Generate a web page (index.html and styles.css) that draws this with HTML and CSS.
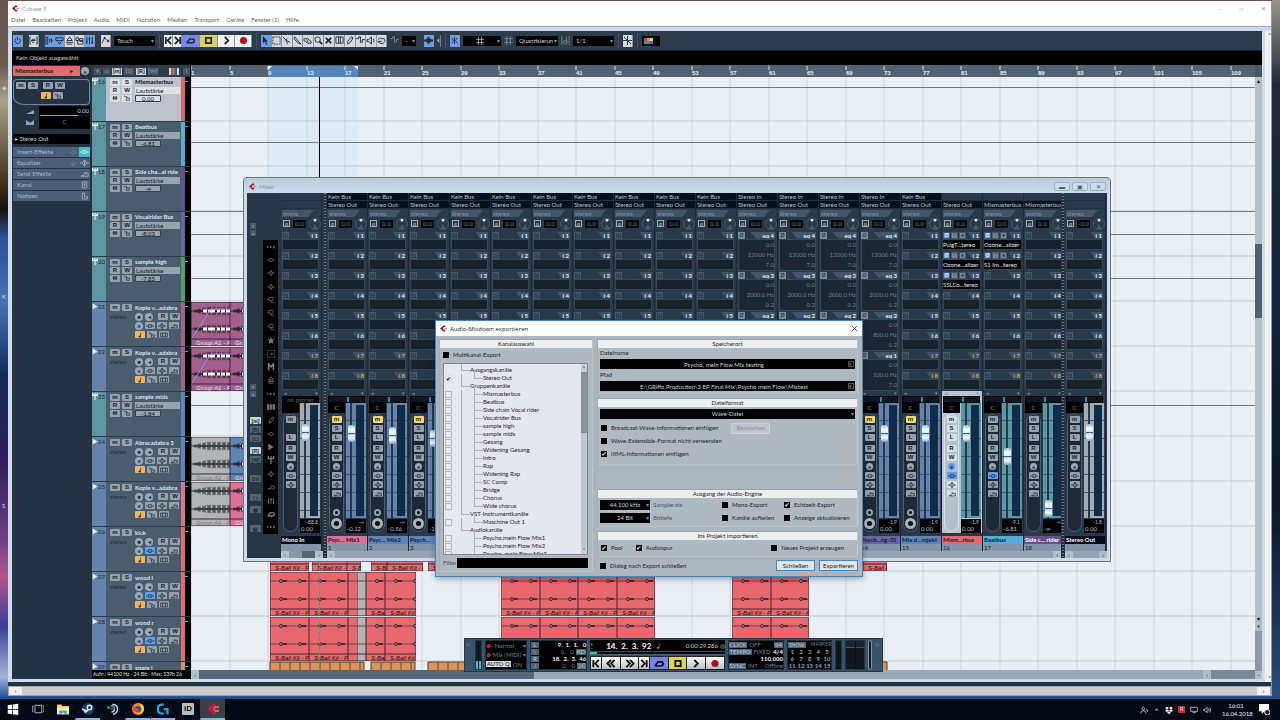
FILE: index.html
```html
<!DOCTYPE html>
<html lang="de">
<head>
<meta charset="utf-8">
<title>Cubase 5</title>
<link rel="stylesheet" href="styles.css">
</head>
<body>
<svg class="defs" aria-hidden="true">
  <symbol id="i-cubase" viewBox="0 0 12 12"><path d="M7 0 0 6l7 6 2-2V8H6L5 6l1-2h3V2z" fill="#a9152f"/><path d="M8 5h4v2H8z" fill="#d8808c"/></symbol>
  <symbol id="i-cubase-red" viewBox="0 0 12 12"><path d="M7 0 9 2 6 6l3 4-2 2L0 6z" fill="#c01c38"/><path d="M8 3h4v6H8L6 6z" fill="#e8576a"/><path d="M8 5h4v2H8z" fill="#4a4248"/></symbol>
  <symbol id="i-power" viewBox="0 0 10 10"><path d="M5 1v4M3 3a3 3 0 1 0 4 0" class="s"/></symbol>
  <symbol id="i-edit" viewBox="0 0 10 10"><path d="M2 1H1v8h1M8 1h1v8H8M3 5h4a2 2 0 1 0-1 2" class="s"/></symbol>
  <symbol id="i-insp" viewBox="0 0 10 10"><path d="M1 1h2v8H1zM5 3v4M7 3q3 2 0 4z" class="s"/></symbol>
  <symbol id="i-over" viewBox="0 0 10 10"><path d="M1 2h8v3H1zM3 6l2 3 2-3" class="s"/></symbol>
  <symbol id="i-pool" viewBox="0 0 10 10"><path d="M5 1 2 5h6zM1 7h8M2 9h6" class="s"/></symbol>
  <symbol id="i-mix" viewBox="0 0 10 10"><path d="M1 2h3v3H1zM5 3h4v2H5zM3 5v4h6V6H5" class="s"/></symbol>
  <symbol id="i-fad" viewBox="0 0 10 10"><path d="M2 1v8M5 1v8M8 1v8M1 6h2M4 3h2M7 7h2" class="s"/></symbol>
  <symbol id="i-auto" viewBox="0 0 10 10"><path d="M1 8 4 2l4 4 1-2" class="s"/><circle cx="4" cy="2" r="1"/><circle cx="8" cy="6" r="1"/></symbol>
  <symbol id="i-cross" viewBox="0 0 10 10"><path d="M5 0v10M0 5h10M1 1l8 8" class="s"/></symbol>
  <symbol id="i-start" viewBox="0 0 10 10"><path d="M2 1v8M8 1 4 5l4 4" class="s w"/></symbol>
  <symbol id="i-end" viewBox="0 0 10 10"><path d="M8 1v8M2 1l4 4-4 4" class="s w"/></symbol>
  <symbol id="i-rew" viewBox="0 0 10 10"><path d="M5 1 1 5l4 4M9 1 5 5l4 4" class="s w"/></symbol>
  <symbol id="i-fwd" viewBox="0 0 10 10"><path d="m1 1 4 4-4 4M5 1l4 4-4 4" class="s w"/></symbol>
  <symbol id="i-cycle" viewBox="0 0 12 10"><path d="M1 8h7q3 0 3-3 0-2-3-2H5L1 8" class="s w"/></symbol>
  <symbol id="i-stop" viewBox="0 0 10 10"><path d="M2 2h6v6H2z" class="s w"/></symbol>
  <symbol id="i-play" viewBox="0 0 10 10"><path d="m3 1 4 4-4 4" class="s w"/></symbol>
  <symbol id="i-rec" viewBox="0 0 10 10"><circle cx="5" cy="5" r="4" fill="#a81820"/></symbol>
  <symbol id="i-arrow" viewBox="0 0 10 10"><path d="M2 0v8l2-2 2 4 1-1-2-3h3z"/></symbol>
  <symbol id="i-range" viewBox="0 0 10 10"><path d="M1 1h8v8H1z" class="s" stroke-dasharray="2 1"/></symbol>
  <symbol id="i-split" viewBox="0 0 10 10"><path d="m1 1 4 4 4 2M5 5l1 4M3 5l3-2" class="s"/></symbol>
  <symbol id="i-glue" viewBox="0 0 10 10"><path d="m2 1 5 6 2 2-3-1-5-5z" class="s"/></symbol>
  <symbol id="i-erase" viewBox="0 0 10 10"><path d="M1 3h4l4 3v2H5L1 5zM4 4l2 3" class="s"/></symbol>
  <symbol id="i-zoomt" viewBox="0 0 10 10"><circle cx="4" cy="4" r="3" class="s"/><path d="m6 6 3 3" class="s w"/></symbol>
  <symbol id="i-mute" viewBox="0 0 10 10"><path d="m2 2 6 6M8 2 2 8" class="s w"/></symbol>
  <symbol id="i-warp" viewBox="0 0 10 10"><path d="M1 1v7h8V1M4 1v7M6 1v7M1 1h8" class="s"/></symbol>
  <symbol id="i-draw" viewBox="0 0 10 10"><path d="M7 1 3 6v3l3-2 3-5z" class="s"/></symbol>
  <symbol id="i-line" viewBox="0 0 10 10"><path d="M0 3h3V1h2v6h2V4h3" class="s"/></symbol>
  <symbol id="i-speaker" viewBox="0 0 10 10"><path d="M1 4h2l3-3v8L3 6H1zM8 3q2 2 0 4" class="s"/></symbol>
  <symbol id="i-hand" viewBox="0 0 10 10"><path d="M1 4q2-3 4-1 4-1 4 3-2 4-6 2L1 6h4" class="s"/></symbol>
  <symbol id="i-snap" viewBox="0 0 10 10"><path d="M2 2 4 5 2 8M8 2 6 5l2 3M5 1v8" class="s"/></symbol>
  <symbol id="i-scroll" viewBox="0 0 10 10"><path d="M5 1v8M0 5h3M10 5H7M3 3v4M7 3v4" class="s w"/></symbol>
  <symbol id="i-left" viewBox="0 0 10 10"><path d="M6 2v6L3 5z"/></symbol>
  <symbol id="i-grid" viewBox="0 0 10 10"><path d="M3 0v10M7 0v10M0 3h10M0 7h10" class="s"/></symbol>
  <symbol id="i-quant" viewBox="0 0 10 10"><path d="M1 0v10M9 0v10M6 1v6" class="s"/><circle cx="5" cy="7" r="2" class="s"/></symbol>
  <symbol id="i-note" viewBox="0 0 10 10"><path d="M6 1v6" class="s"/><ellipse cx="4.500" cy="7.500" rx="2" ry="1.500"/></symbol>
  <symbol id="i-lock" viewBox="0 0 10 10"><path d="M4 5h5v4H4zM5 5V3H1V1" class="s"/></symbol>
  <symbol id="i-ins" viewBox="0 0 12 8"><path d="M0 4h3M9 4h3M4 2h4v4H4z" class="s"/></symbol>
  <symbol id="i-eq" viewBox="0 0 12 8"><path d="m6 0 3 4-3 4-3-4zM0 4h3M9 4h3M6 0v8" class="s"/></symbol>
  <symbol id="i-send" viewBox="0 0 12 8"><path d="M1 7h10V3H7L5 6H2M5 3l2-2" class="s"/></symbol>
  <symbol id="i-lanes" viewBox="0 0 12 8"><path d="M1 1h10v6H1zM4 1v6M8 1v6" class="s"/></symbol>
  <symbol id="i-strip" viewBox="0 0 12 8"><path d="M3 0h6v8H3zM6 2v4M5 3h2" class="s"/></symbol>
  <symbol id="i-pad" viewBox="0 0 12 8"><path d="M3 0v8h7V5H6V0z" class="s"/></symbol>
  <symbol id="i-bars" viewBox="0 0 12 8"><path d="M4 1v6M6 1v6M8 1v6M2 4h8" class="s"/></symbol>
  <symbol id="i-fork" viewBox="0 0 10 12"><path d="M1 0v4h8V0M5 0v12" class="s w"/></symbol>
  <symbol id="i-wave" viewBox="0 0 10 12"><path d="m1 1 8 5-8 5z"/></symbol>
  <symbol id="i-star" viewBox="0 0 10 10"><path d="m5 0 1 4h4L7 6l1 4-3-2-3 2 1-4-3-2h4z"/></symbol>
  <symbol id="i-preset" viewBox="0 0 12 10"><path d="M3 1h6v5H3zM0 4h3M6 6v3h5" class="s"/></symbol>
  <symbol id="i-dots" viewBox="0 0 12 10"><path d="M0 4h2v2H0zM4 4h3v2H4zM9 3h1v4H9zM11 3h1v4h-1z"/></symbol>
  <symbol id="i-m" viewBox="0 0 10 10"><path d="M2 9V1l3 4 3-4v8" class="s w"/></symbol>
  <symbol id="i-box" viewBox="0 0 10 10"><path d="M0 0h10v10H0z" class="s"/><path d="M5 4h2v2H5z"/></symbol>
  <symbol id="i-keys" viewBox="0 0 12 10"><path d="M0 1h12v8H0z"/><path d="M4 1v8M8 1v8" stroke="#000"/></symbol>
  <symbol id="i-x" viewBox="0 0 10 10"><path d="m1 1 8 8M9 1 1 9" class="s"/></symbol>
</svg>
<main class="desktop">
  <div class="desk-icons"><span>&#9672;</span><span>K</span><span>S</span></div>

  <section class="app">
    <header class="titlebar"><svg class="logo"><use href="#i-cubase"/></svg><span>Cubase 5</span>
      <span class="caption"><button aria-label="Minimieren">&#8211;</button><button aria-label="Maximieren">&#9633;</button><button aria-label="Beenden">&#10005;</button></span>
    </header>
    <nav class="menubar"><a href="#">Datei</a><a href="#">Bearbeiten</a><a href="#">Projekt</a><a href="#">Audio</a><a href="#">MIDI</a><a href="#">Notation</a><a href="#">Medien</a><a href="#">Transport</a><a href="#">Geräte</a><a href="#">Fenster (1)</a><a href="#">Hilfe</a></nav>
    <div class="client">
      <div class="project">
        <div class="toolbar" id="toolbar"></div>
        <div class="infoline">Kein Objekt ausgewählt</div>
        <div class="workspace">
          <aside class="inspector">
            <div class="insp-title"><strong>Mixmasterbus</strong><span>&#9656;</span><i class="round">e</i></div>
            <div class="insp-box"><div><button class="key">m</button><button class="key">S</button><button class="key gap">R</button><button class="key">W</button></div>
              <div class="second"><button class="key on" aria-label="Zeitbasis"><svg><use href="#i-note"/></svg></button><button class="key" aria-label="Sperren"><svg><use href="#i-lock"/></svg></button></div></div>
            <div class="insp-level"><div class="glyphs"><svg viewBox="0 0 10 6"><path d="M0 6 10 1v5z"/></svg><svg viewBox="0 0 10 6"><path d="M0 0v6h10V0L6 3H4z"/></svg></div><div class="level"><span>0.00</span><i></i><b>C</b></div></div>
            <div class="insp-out">&#9656; Stereo Out</div>
            <div class="insp-tabs" id="tabs"></div>
          </aside>
          <div class="tracks">
            <div class="tracks-head"><button>&#9662;</button><button>&#9633;</button><button class="lit">[m]</button><button>[S]</button><button class="lit">[R]</button><button>[W]</button><button class="rgb" aria-label="Farben"></button><button>&#124;</button></div>
            <div class="tracks-list" id="tracks"></div>
            <div class="record-info">Aufn.: 44100 Hz - 24 Bit - Max: 339h 26</div>
          </div>
          <div class="arrange">
            <svg class="ruler" id="ruler"></svg>
            <svg class="events" id="events"></svg>
            <div class="hscroll"><button>&#8249;</button><span></span><button>&#8250;</button><i></i></div>
          </div>
          <div class="vscroll"><button>&#9652;</button><span></span><button>&#9662;</button><button>+</button><i></i><button>&#8211;</button></div>
        </div>
      </div>
      <div class="outer-v"><button>&#708;</button><span></span><button>&#709;</button></div>
    </div>
    <div class="outer-h"><button>&#8249;</button><span></span><button>&#8250;</button></div>
  </section>

  <section class="mixer">
    <header class="mixer-title"><svg class="logo"><use href="#i-cubase"/></svg><span>Mixer</span><span class="winkeys"><button aria-label="Minimieren">&#9644;</button><button aria-label="Maximieren">&#9635;</button><button aria-label="Schließen">&#10005;</button></span></header>
    <div class="mixer-body">
      <div class="mixer-side">
        <div class="side-keys" id="sidekeys"></div>
        <div class="side-icons" id="sideicons"></div>
      </div>
      <div class="bank first"><div class="strips" id="inbank"></div><div class="mscroll"><button>&#8249;</button><span></span><button>&#8250;</button></div></div>
      <div class="divider"></div>
      <div class="bank mid"><div class="strips" id="midbank"></div><div class="mscroll"><button>&#8249;</button><span></span><button>&#8250;</button></div></div>
      <div class="divider"></div>
      <div class="bank last"><div class="strips" id="outbank"></div><div class="mscroll"><button>&#8249;</button><span></span><button>&#8250;</button></div></div>
    </div>
  </section>

  <section class="dialog">
    <header class="dialog-title"><svg class="logo"><use href="#i-cubase"/></svg><span>Audio-Mixdown exportieren</span><button aria-label="Schließen"><svg><use href="#i-x"/></svg></button></header>
    <div class="dialog-body">
      <div class="panel channels">
        <h2>Kanalauswahl</h2>
        <label class="check top"><input type="checkbox">Multikanal-Export</label>
        <div class="listbox"><div class="tree" id="tree"></div><div class="lscroll"><button>&#708;</button><span></span><button>&#709;</button></div></div>
        <label class="filter">Filter<input type="text"></label>
      </div>
      <div class="options">
        <div class="panel place"><h2>Speicherort</h2>
          <label class="field">Dateiname<span><input type="text" value="Psycho, mein Flow Mix testing"><i>&#9662;</i></span></label>
          <label class="field">Pfad<span><input type="text" value="E:\GRiffo Production\3 EP Final Mix\Psycho mein Flow\Mixtest"><i>&#9662;</i></span></label>
        </div>
        <div class="panel format"><h2>Dateiformat</h2>
          <span class="dd full"><select class="black" aria-label="Dateiformat"><option>Wave-Datei</option></select></span>
          <div class="line"><label class="check"><input type="checkbox">Broadcast-Wave-Informationen einfügen</label><button class="disabled" disabled>Bearbeiten</button></div>
          <label class="check"><input type="checkbox">Wave-Extensible-Format nicht verwenden</label>
          <label class="check"><input type="checkbox" checked>iXML-Informationen einfügen</label>
        </div>
        <div class="panel engine"><h2>Ausgang der Audio-Engine</h2>
          <div class="engine-grid">
            <label class="rate"><span class="dd"><select class="black"><option>44.100 kHz</option></select></span>Samplerate</label><label class="check"><input type="checkbox">Mono-Export</label><label class="check"><input type="checkbox" checked>Echtzeit-Export</label>
            <label class="rate"><span class="dd"><select class="black"><option>24 Bit</option></select></span>Bittiefe</label><label class="check"><input type="checkbox">Kanäle aufteilen</label><label class="check"><input type="checkbox">Anzeige aktualisieren</label>
          </div>
        </div>
        <div class="panel import"><h2>Ins Projekt importieren</h2>
          <div class="import-row"><label class="check"><input type="checkbox" checked>Pool</label><label class="check"><input type="checkbox" checked>Audiospur</label><label class="check new"><input type="checkbox">Neues Projekt erzeugen</label></div>
        </div>
        <div class="actions"><label class="check"><input type="checkbox">Dialog nach Export schließen</label><button>Schließen</button><button>Exportieren</button></div>
      </div>
    </div>
  </section>

  <section class="transport">
    <i class="grip">&#9678;</i><div class="tmeter"><i></i><i></i></div>
    <div class="tbox modes"><span><b>&#8853;</b>Normal<em>&#9662;</em></span><span><b>&#8853;</b>Mix (MIDI)<em>&#9662;</em></span><span><u>AUTO Q</u>ON</span></div>
    <div class="tbox locs"><span><u>L</u><strong>9. &nbsp;1. &nbsp;1. &nbsp; 0</strong></span><span><u>\</u><em>0. &nbsp; 0</em><u>KD</u></span><span><u>R</u><strong>18. &nbsp;2. &nbsp;3. &nbsp;46</strong></span><span><u>/</u><em>0. &nbsp; 0</em><u>[II]</u></span></div>
    <div class="tmain"><div class="time"><b>+<br>&#8211;</b><strong>14. &nbsp;2. &nbsp;3. &nbsp;92</strong><svg><use href="#i-note"/></svg><span>0:00:29.286 &#9678;</span></div><div class="posbar"><i></i></div><div class="tkeys" id="tkeys"></div></div>
    <div class="tbox tempo"><span><u>CLICK</u>OFF<u class="r">II4</u></span><span><u>TEMPO</u>FIXED<strong>4/4</strong></span><span><strong>110.000</strong></span><span><u>SYNC</u>INT.<em>Offline</em></span></div>
    <div class="tbox markers"><span><u>SHOW</u><em>MARKER</em></span><div id="marks"></div></div>
    <div class="tmeter two"><i></i><i></i></div><div class="tmeter big"><i></i><i></i></div><div class="tfader"></div><i class="grip">&#9678;</i>
  </section>

  <footer class="taskbar">
    <button aria-label="Start"><svg viewBox="0 0 16 16"><path fill="#fff" d="M1 3l6-1v6H1zM8 2l7-1v7H8zM1 9h6v6l-6-1zM8 9h7v7l-7-1z"/></svg></button>
    <button aria-label="Taskansicht"><svg viewBox="0 0 16 16"><path fill="none" stroke="#ddd" d="M4 3h9v10H4zM2 4H1v8h1M15 4h1v8h-1"/></svg></button>
    <button aria-label="Explorer"><svg viewBox="0 0 16 16"><path fill="#f5cf5a" d="M0 2h6l1 2h9v11H0z"/><path fill="#fff0ac" d="M0 6h16v9H0z"/><path fill="#36a5df" d="M3 10h10v5h-3v-2H6v2H3z"/></svg></button>
    <button class="run" aria-label="Steam"><svg viewBox="0 0 16 16"><circle cx="8" cy="8" r="8" fill="#153d70"/><circle cx="10" cy="6" r="3" fill="none" stroke="#dbe8f4" stroke-width="2"/><path d="m0 8 6 3 3-2" stroke="#dbe8f4" stroke-width="2" fill="none"/><circle cx="5" cy="11" r="2" fill="#dbe8f4"/></svg></button>
    <button aria-label="TeamSpeak"><svg viewBox="0 0 16 16"><path d="M7 2q7 0 7 6t-6 7M5 4q5 0 5 4t-4 4" fill="none" stroke="#b9c8d8" stroke-width="2"/><circle cx="7" cy="7" r="3" fill="#2d4c6c"/><circle cx="2" cy="6" r="2" fill="#27a348"/></svg></button>
    <button class="run" aria-label="Firefox"><svg viewBox="0 0 16 16"><circle cx="8" cy="8" r="8" fill="#f58220"/><path d="M8 0q9 2 8 9-3 8-10 6 8-1 7-8-1-4-5-7" fill="#ffd33b"/><circle cx="8" cy="8" r="4" fill="#2950ad"/><path d="M1 4q3 0 4 3l5 2q-4 5-8 1z" fill="#ef4b28"/></svg></button>
    <button class="run" aria-label="Logitech"><svg viewBox="0 0 16 16"><path d="M9 2H7Q1 2 1 8t6 6h2M9 8h5v7" fill="none" stroke="#10a8e8" stroke-width="3"/></svg></button>
    <button><span class="id">iD</span></button>
    <button class="active" aria-label="Cubase"><svg viewBox="0 0 12 12"><use href="#i-cubase-red"/></svg></button>
    <div class="tray"><svg viewBox="0 0 12 12"><circle cx="5" cy="4" r="2" class="s"/><path d="M1 11q0-4 4-4t4 4M9 5q3 0 2 4" class="s"/></svg><span>&#708;</span><svg viewBox="0 0 12 12"><path fill="#fff" d="m3 1 3 2-3 2-3-2zM9 1l3 2-3 2-3-2zM3 5l3 2-3 2-3-2zM9 5l3 2-3 2-3-2zM6 8l3 2-3 2-3-2z"/></svg><span class="red">R</span><svg viewBox="0 0 12 12"><path class="s" d="M1 2h10v6H1zM4 10h5"/></svg><svg viewBox="0 0 12 12"><path class="s" d="M1 5h2l3-3v8L3 7H1zM8 4q2 2 0 4M10 2q3 4 0 8"/></svg></div>
    <div class="clock"><span>16:01</span><span>16.04.2018</span></div>
    <svg class="notice" viewBox="0 0 12 12"><path fill="#fff" d="M0 0h11v8H6l-3 3V8H0z"/><circle cx="9" cy="9" r="3" fill="#222" stroke="#fff"/></svg>
  </footer>
</main>
<script src="app.js"></script>
</body>
</html>
```
FILE: styles.css
```css
* { box-sizing: border-box; }
body { margin: 0; font: 6px/8px "Lato", "Liberation Sans", sans-serif; overflow: hidden; }
button, input, select { font: inherit; color: inherit; margin: 0; padding: 0; border: 0; background: none; border-radius: 0; }
i, em { font-style: normal; }
u { text-decoration: none; }
a { color: inherit; text-decoration: none; }
h2 { margin: 0; font: inherit; }
.defs { position: absolute; width: 0; height: 0; }
svg { fill: currentColor; display: block; }
.s { fill: none; stroke: currentColor; stroke-width: 1; }
.w { stroke-width: 2; }
.logo { width: 7px; height: 7px; flex: none; }
.desktop { position: relative; height: 100vh; overflow: hidden; background: linear-gradient(#68544f, #6d5950 9%, #aaa08a 14%, #49341d 25%, #15100e 29%, #2c4f99 33%, #4772ba 42%, #142a5c 52%, #301b60 64%, #713f88 75%, #b25785 80%, #3e3c9f 87%, #a3b4da 94%, #1b4c94 97%, #112950); }
.desktop::after { content: ""; position: absolute; right: 0; top: 0; width: 8px; height: 100%; background: linear-gradient(#9a938c, #1e2837 12%, #14253c 40%, #0b1627 70%, #2b5384); }
.desk-icons { position: absolute; left: 2px; top: 84px; color: #ddd; display: flex; flex-direction: column; gap: 201px; }
.desk-icons span { line-height: 8px; }

.app { position: absolute; inset: 1px 8px 24px; display: flex; flex-direction: column; background: #fff; border-right: 1px solid #8f9aa5; z-index: 1; }
.titlebar { height: 13px; display: flex; align-items: center; gap: 3px; padding: 2px 4px 0; color: #999; }
.titlebar .caption { margin-left: auto; display: flex; gap: 18px; padding-right: 1px; }
.titlebar button { line-height: 8px; }
.menubar { height: 13px; display: flex; align-items: center; gap: 7px; padding-left: 3px; color: #666; border-bottom: 1px solid #a2a7ab; }
.client { flex: 1; min-height: 0; display: flex; background: #cddceb; padding: 4px 0 0 4px; border-bottom: 4px solid #243344; }
.project { flex: 1; min-width: 0; display: flex; flex-direction: column; background: #243241; margin-bottom: 3px; }
.outer-v { width: 9px; display: flex; flex-direction: column; align-items: flex-end; color: #444; border-left: 3px solid #cddceb; background: #f0f0f0; }
.outer-v span { flex: 1; }
.outer-h { height: 10px; background: #f0f0f0; display: flex; border: 1px solid #a0a5aa; }
.outer-h button { width: 13px; line-height: 6px; }
.outer-h span { flex: 1; background: #cdcdcd; }

.toolbar { height: 20px; background: #2e3b4b; display: flex; align-items: center; padding: 0 1px; gap: 3px; border-bottom: 1px solid #15202c; }
.tg { display: flex; height: 12px; background: #0d151d; border-radius: 1px; flex: none; }
.tg button { width: 10px; height: 12px; background: #d4d8dc; color: #202830; display: grid; place-items: center; border-right: 1px solid #8b949d; }
.tg.spaced { margin-right: 3px; }
.tg.tools button { flex: 1; }
.tg.tools { width: 126px; }
.tg button.blue { background: #6aa0ea; }
.tg button.nar { width: 9px; background: #eef0f3; }
.tg button.vio { background: #7c86e8; width: 18px; }
.tg button.yel { background: #dcd060; width: 18px; }
.tg button.big { width: 17px; background: #eef0f3; }
.tg button.dim { width: 7px; background: #2e3b4b; color: #8d9daa; border-color: #6e7d8b; }
.tg button.ghost { width: 9px; background: #2e3b4b; color: #74838f; border: 0; }
.tg svg { width: 9px; height: 9px; }
.combo { height: 10px; background: #000; color: #cfd8df; appearance: none; padding: 0 5px 0 3px; }
.combo-wrap { position: relative; display: flex; color: #6f9aa5; background: #000; flex: none; }
.combo-wrap.far { margin-right: 5px; }
.combo-wrap svg { position: absolute; left: 13px; top: 1px; width: 8px; height: 8px; color: #9cc; }
.combo-wrap::after, .dd::after { content: "\25BE"; position: absolute; right: 1px; top: 0; line-height: 9px; color: #6f9aa5; }
.sep { width: 1px; height: 16px; background: #46566a; margin: 0 1px; }
.swatches { width: 18px; height: 10px; background: #000; padding: 2px; display: grid; grid-template-columns: repeat(3, 3px); grid-auto-rows: 3px; }
.infoline { height: 14px; background: #000; color: #c4ccd0; padding: 3px 4px; }
.workspace { flex: 1; min-height: 0; display: flex; }

.inspector { width: 80px; padding: 1px 2px 0 1px; display: flex; flex-direction: column; color: #c9d5e2; }
.insp-title { height: 10px; display: flex; align-items: center; background: linear-gradient(90deg, #e86870 67px, transparent 67px); color: #111; padding-left: 2px; }
.insp-title span { margin-left: auto; width: 8px; }
.insp-title .round { margin: 0 1px 0 3px; }
.round { width: 8px; height: 8px; border-radius: 50%; background: #9ba8b5; color: #1c2732; text-align: center; line-height: 7px; flex: none; display: grid; place-items: center; }
.round.on { background: #5b9bee; }
.insp-box { margin-top: 3px; height: 26px; border: 1px solid #6d87a5; border-radius: 4px; padding: 2px; border-bottom-left-radius: 12px 8px; }
.insp-box > div { display: flex; gap: 2px; }
.insp-box .second { padding: 3px 0 0 25px; }
.key { width: 10px; height: 7px; background: #95a1ad; color: #141c24; font: bold 6px/7px "Liberation Sans", sans-serif; display: grid; place-items: center; border-radius: 1px; flex: none; }
.key svg { width: 8px; height: 6px; }
.key.gap { margin-left: 3px; }
.key.on, .key.amber { background: #edb563; }
.key.blue { background: #62a0f2; }
.key.yellow { background: #eed676; }
.insp-level { display: flex; justify-content: space-between; margin-top: 1px; height: 23px; }
.glyphs { display: flex; flex-direction: column; gap: 6px; padding: 3px 0 0 13px; color: #8ea4ba; }
.glyphs svg { width: 8px; height: 5px; }
.level { width: 51px; background: #000; display: flex; flex-direction: column; align-items: flex-end; padding: 1px; }
.level i { height: 1px; width: 100%; background: linear-gradient(90deg, #45b9c9 78%, #123 78%); }
.level b { align-self: center; font-weight: normal; color: #8295a8; margin-top: 2px; }
.insp-out { margin-top: 5px; background: #000; height: 10px; padding: 1px 2px; }
.insp-tabs { margin-top: 3px; }
.insp-tabs button { display: flex; align-items: center; width: 100%; height: 10px; margin-bottom: 1px; padding-left: 4px; background: #4b6078; color: #aabbce; }
.insp-tabs button > svg { width: 11px; height: 10px; padding: 1px; margin-left: auto; background: #4b6078; }
.insp-tabs .byp { margin-left: auto; width: 12px; }
.insp-tabs .byp + svg { margin-left: 0; }
.insp-tabs .sel svg { background: #3fc0ca; color: #fff; }

.tracks { width: 98px; display: flex; flex-direction: column; }
.tracks-head { height: 12px; display: flex; align-items: center; gap: 2px; padding-left: 2px; background: #2e3d4c; color: #7c8a97; font: bold 6px/7px "Lato", sans-serif; flex: none; }
.tracks-head button { height: 7px; width: 7px; line-height: 6px; background: #46535f; }
.tracks-head button:nth-child(n+3):nth-child(-n+6) { width: 10px; }
.tracks-head .lit { color: #222; background: #cad1d7; }
.tracks-head .rgb { width: 10px; margin: 0 2px 0 auto; background: linear-gradient(90deg, #ddd 2px, #d44 2px 4px, #4a4 4px 6px, #44d 6px 8px, #ddd 8px); }
.tracks-list { flex: 1; min-height: 0; overflow: hidden; }
.record-info { height: 9px; background: #000; color: #dfe4e8; white-space: nowrap; padding-left: 1px; flex: none; font-family: "Liberation Sans Narrow", "Lato", sans-serif; font-size: 5px; line-height: 9px; }
.track { height: 45px; display: flex; background: #4a5d6e; border-bottom: 1px solid #2d3c4a; color: #dce6ef; }
.track.sel { background: #bcc3cc; color: #111; }
.track .no { width: 14px; background: #6583ab; display: flex; align-items: flex-start; color: #182838; padding-top: 1px; }
.track.grp .no { background: #5b96a1; }
.no svg { width: 6px; height: 7px; color: #e8eef4; flex: none; }
.track .body { flex: 1; min-width: 0; padding: 1px 1px 0 4px; display: flex; flex-direction: column; }
.track .r { height: 9px; display: flex; align-items: center; gap: 2px; }
.grp .r { height: 8px; }
.track .nm { margin-left: 1px; font-weight: bold; white-space: nowrap; }
.track .st { width: 24px; color: #1c2b3a; }
.sel .key { background: #dde1e6; }
.track .par { margin-left: 1px; height: 7px; flex: 1; background: #98a3af; color: #10181f; line-height: 7px; padding-left: 1px; white-space: nowrap; }
.track .val { margin-left: 1px; width: 26px; height: 7px; line-height: 6px; border: 1px solid #36434f; border-radius: 1px; background: #98a3af; color: #111; text-align: center; }
.sel .par, .sel .val { background: #dfe3e7; }
.track .off { padding-left: 25px; }
.track .bar { width: 4px; }
.track .met { width: 5px; background: #000; padding-top: 4px; }
.met i { display: block; height: 1px; width: 3px; background: #19c0d2; }

.arrange { flex: 1; min-width: 0; display: flex; flex-direction: column; border-left: 1px solid #000; overflow: hidden; }
.ruler { height: 12px; width: 100%; background: #516371; flex: none; }
.ruler text { fill: #e8edf0; font: bold 6px "Liberation Sans", sans-serif; }
.events { flex: 1; min-height: 0; width: 100%; background: #eaeff4; }
.events text { font: italic 6px "Liberation Sans", sans-serif; }
.hscroll { height: 9px; display: flex; background: #566878; flex: none; }
.hscroll button, .vscroll button, .mscroll button { background: #b4bdc5; color: #111; width: 8px; line-height: 8px; }
.hscroll span { flex: 1; background: linear-gradient(90deg, #566878 335px, #9ca8b3 335px); }
.hscroll i { width: 44px; background: #7c8894; }
.vscroll { width: 7px; display: flex; flex-direction: column; background: #465867; padding-top: 12px; }
.vscroll span { flex: 1; background: linear-gradient(#b5bfc9 30%, #4f6272 30% 44%, #b5bfc9 44%); }
.vscroll i { height: 40px; background: #8b98a5; }
.vscroll button { width: 7px; }

.mixer { position: absolute; z-index: 2; left: 243px; top: 177px; width: 868px; height: 385px; border: 1px solid #6a7782; border-radius: 4px 4px 0 0; background: #ccdbe9; display: flex; flex-direction: column; padding: 0 3px 3px; }
.mixer-title { height: 15px; display: flex; align-items: center; gap: 3px; padding: 2px 2px 0 5px; color: #8796a5; flex: none; margin: 0 -3px; background: linear-gradient(#bacbd9, #ccdbe9); border-radius: 4px 4px 0 0; }
.winkeys { margin-left: auto; display: flex; gap: 2px; padding-right: 2px; }
.winkeys button { width: 16px; height: 9px; border: 1px solid #9caebd; border-radius: 2px; line-height: 7px; color: #4b5660; background: #cfdce8; }
.mixer-body { flex: 1; min-height: 0; display: flex; background: #2a3949; overflow: hidden; }
.mixer-side { width: 34px; display: flex; background: #273544; flex: none; }
.side-keys { width: 16px; display: flex; flex-direction: column; padding: 30px 0 4px 3px; color: #8797a6; gap: 1px; }
.side-keys .arr { height: 6px; width: 6px; line-height: 5px; font-size: 5px; background: #4b5a69; }
.side-keys .rest { width: 11px; display: flex; flex-direction: column; gap: 2px; padding-top: 19px; }
.side-keys .far { margin-top: 147px; }
.side-keys .rest button { height: 7px; font: bold 5px/6px "Liberation Sans", sans-serif; background: #526475; color: #1d2a36; border-radius: 1px; }
.side-keys .rest button:nth-child(4), .side-keys .rest button:nth-child(8) { margin-top: 3px; }
.side-keys .rest button:nth-child(6), .side-keys .rest button:nth-child(7), .side-keys .rest button:nth-child(9) { margin-top: 10px; }
.side-keys .rest .lit { background: #c9d4dd; }
.side-icons { width: 15px; margin: 47px 0 24px; background: #000; color: #717b84; display: flex; flex-direction: column; align-items: center; justify-content: space-around; }
.side-icons svg { width: 8px; height: 8px; }
.bank { display: flex; flex-direction: column; flex: none; overflow: hidden; }
.bank.first { width: 42px; }
.bank.mid { flex: 1; }
.bank.last { width: 42px; }
.divider { width: 4px; flex: none; background: repeating-linear-gradient(#6a7a88 0 1px, #1f2c39 1px 3px); border: solid #2a3949; border-width: 0 1px; }
.strips { flex: 1; min-height: 0; display: flex; overflow: hidden; }
.mscroll { height: 7px; display: flex; background: #5a6b7a; flex: none; }
.mscroll span { flex: 1; background: #97a4af; }
.first .mscroll span { background: linear-gradient(90deg, #8796a3 50%, #566675 50%); }
.mscroll button { line-height: 6px; }
.strip { width: 41px; flex: none; display: flex; flex-direction: column; border-right: 1px solid #1d2936; color: #b6c9da; }
.bus { height: 8px; background: #04101e; padding-left: 1px; line-height: 8px; white-space: nowrap; border-bottom: 1px solid #22303f; }
.bus.none { background: none; }
.fmt { height: 7px; width: 32px; margin: 1px 0 0 1px; padding-left: 1px; background: #42566a; color: #8296ab; line-height: 7px; clip-path: polygon(0 0, 100% 0, 82% 100%, 0 100%); }
.gain { height: 13px; display: flex; align-items: center; gap: 3px; padding-left: 2px; flex: none; }
.gain .ph { width: 7px; height: 7px; border: 1px solid #9ca9b6; color: #9ca9b6; line-height: 5px; text-align: center; }
.gain .db { width: 13px; height: 8px; background: #05090d; text-align: center; color: #5f788f; }
.knob { width: 12px; height: 12px; border-radius: 50%; border: 1px solid #46596c; background: radial-gradient(circle at 50% 10%, #dce6f0 1px, transparent 2px), conic-gradient(transparent 150deg, #45596f 150deg 210deg, transparent 210deg); }
.slots { height: 160px; margin-top: 1px; flex: none; }
.slot { height: 20px; display: flex; flex-direction: column; padding: 0 2px 0 1px; }
.slot .hd { height: 8px; display: flex; align-items: center; gap: 1px; }
.slot .pw { width: 7px; height: 7px; border: 1px solid #46586a; color: #52667a; line-height: 5px; font-size: 5px; text-align: center; }
.slot .pw.on { background: #5a9bf0; color: #fff; }
.slot .pw.lit { background: #7c8a98; color: #10181f; }
.slot .lab { margin-left: auto; height: 7px; min-width: 13px; background: #3f5268; color: #e0e8f0; font-weight: bold; line-height: 7px; text-align: right; padding: 0 1px 0 5px; clip-path: polygon(0 0, 100% 0, 100% 100%, 35% 100%); }
.slot .lab.y { color: #d0a344; }
.slot .bx { height: 11px; background: #18222d; border: 1px solid #34465a; line-height: 9px; color: #e6edf2; white-space: nowrap; }
.slot .bx.full { background: #000; border-width: 1px 0; }
.eqs { height: 40px; display: flex; flex-direction: column; padding: 0 2px 0 1px; }
.eqs .hd { height: 8px; display: flex; align-items: center; }
.eqs .pw { width: 7px; height: 7px; background: #7c8a98; color: #10181f; line-height: 6px; font-size: 5px; text-align: center; }
.eqs .lab { margin-left: auto; width: 25px; height: 7px; background: #42566a; color: #e0e8f0; font-weight: bold; line-height: 7px; text-align: right; padding-right: 1px; clip-path: polygon(0 0, 100% 0, 100% 100%, 25% 100%); }
.eqs .bx { flex: 1; border: 1px solid #34465a; background: #1c2733; text-align: right; line-height: 10px; color: #6b8296; }
.panrow { height: 5px; color: #7f8e9c; display: flex; justify-content: space-between; padding: 0 3px; font-size: 5px; line-height: 5px; }
.fadersec { flex: 1; min-height: 0; display: flex; flex-direction: column; padding: 0 1px; }
.pan { height: 7px; background: linear-gradient(90deg, #0a1826 18px, #2094a8 18px 20px, #0a1826 20px); border: 1px solid #000; margin-right: 1px; }
.pan.mono { background: #000; color: #666; white-space: nowrap; text-align: center; line-height: 5px; }
.fcols { flex: 1; min-height: 0; display: flex; gap: 1px; }
.lcol { width: 17px; display: flex; flex-direction: column; }
.cc { height: 10px; background: #000; color: #8496a5; text-align: center; line-height: 9px; flex: none; }
.caps { flex: 1; margin: 1px 1px 1px; border: 1px solid #4a5c70; border-radius: 8px; background: #1d2935; display: flex; flex-direction: column; align-items: center; gap: 2px; padding-top: 1px; }
.caps .round { height: 7px; width: 7px; }
.caps .sp { height: 0; }
.caps .skip { height: 7px; }
.caps .push { margin-top: auto; }
.caps .mon { width: 7px; height: 7px; border-radius: 50%; border: 2px solid #95a1ad; background: #111; }
.caps .rc { width: 11px; height: 11px; border-radius: 50%; border: 3px solid #a9b3bd; background: #05080b; margin-bottom: 2px; }
.fcol { width: 20px; display: flex; flex-direction: column; }
.fader { flex: 1; position: relative; background: linear-gradient(90deg, transparent 4px, #24384b 4px 6px, transparent 6px), repeating-linear-gradient(transparent 0 17px, #41597a 17px 18px), var(--fc); }
.fader .mt { position: absolute; right: 2px; top: 2px; bottom: 2px; width: 8px; background: #102c49; }
.fader .cap { position: absolute; left: 2px; width: 7px; height: 17px; border-radius: 2px; background: linear-gradient(#8eb5d5, #fff 25%, #dbe9f5 45%, #38668d 47% 52%, #b8d2e8 55%, #fff 75%, #719ec5); }
.fval { height: 14px; margin-top: 1px; background: #000; color: #b3c2cf; display: flex; flex-direction: column; line-height: 6px; }
.fval small { font-size: 5px; text-align: right; padding-right: 2px; line-height: 6px; }
.fval span { padding-left: 1px; line-height: 7px; }
.cname { height: 8px; margin-top: 3px; line-height: 8px; font-weight: bold; color: #10202e; padding-left: 1px; white-space: nowrap; overflow: hidden; flex: none; }
.cno { height: 7px; background: #8195ab; color: #0d1924; line-height: 7px; padding-left: 1px; flex: none; }
.strip.cur .fadersec, .strip.cur .panrow { background: #b8c4d0; }
.cur .caps { background: #b3c0cc; border-color: #d9e1e8; }
.cur .key { background: #d8dee4; }
.cur .key.blue { background: #5b9bee; }

.dialog { position: absolute; z-index: 4; left: 435px; top: 320px; width: 428px; border: 1px solid #3c87c8; background: #adb6bd; color: #202428; box-shadow: 0 2px 6px rgba(0, 20, 50, .35); }
.dialog-title { height: 15px; background: #fff; display: flex; align-items: center; gap: 3px; padding: 0 4px; color: #222; }
.dialog-title span { font-family: "Open Sans", sans-serif; }
.dialog-title button { margin-left: auto; }
.dialog-title button svg { width: 7px; height: 7px; }
.dialog-body { display: flex; gap: 4px; padding: 3px 4px 4px 3px; }
.panel { border: 1px solid #bcc5cb; border-top-color: #9aa4ac; border-left-color: #a2acb4; border-radius: 2px; background: #b0b9c0; }
.panel h2 { background: #eceff0; height: 8px; line-height: 8px; text-align: center; }
.channels { width: 154px; display: flex; flex-direction: column; padding-bottom: 2px; }
.check { display: flex; align-items: center; gap: 4px; height: 8px; white-space: nowrap; }
.check input, .tree input { appearance: none; width: 6px; height: 6px; background: #000; display: grid; place-items: center; flex: none; }
.check input:checked::after, .tree input:checked::after { content: "\2714"; color: #fff; font: 6px/6px "DejaVu Sans", sans-serif; }
.check.top { margin: 3px 0 4px 3px; }
.listbox { height: 192px; margin: 0 4px 0 3px; border: 1px solid #7f8990; background: #e6e6ee; display: flex; }
.tree { flex: 1; overflow: hidden; padding-top: 2px; }
.tree label, .tree div { height: 8px; display: flex; align-items: center; white-space: nowrap; padding-left: 1px; position: relative; }
.tree div { padding-left: 26px; }
.tree div::before, .tree label::before { content: ""; position: absolute; left: 17px; top: -4px; height: 8px; width: 8px; border: solid #b2b2bb; border-width: 0 0 1px 1px; }
.tree label::before { left: 30px; width: 8px; }
.tree label::after { content: ""; position: absolute; left: 17px; top: 0; height: 8px; border-left: 1px solid #b2b2bb; }
.tree div:last-of-type ~ label::after { display: none; }
.tree label span { margin-left: 31px; }
.tree input { width: 7px; height: 7px; background: #e9e9ef; border: 1px solid #b9b9c2; }
.tree input:checked { border-color: #ddd; }
.tree input:checked::after { color: #000; }
.lscroll { width: 6px; display: flex; flex-direction: column; background: #8e979e; font-size: 5px; }
.lscroll button { width: 6px; background: #c5ced4; }
.lscroll span { flex: 1; background: linear-gradient(#8b949b 35%, #bcc6ce 35%); }
.filter { display: flex; align-items: center; justify-content: space-between; padding: 3px 4px 0 3px; color: #3c5870; }
.filter input { width: 132px; height: 10px; background: #000; color: #fff; }
.options { flex: 1; min-width: 0; display: flex; flex-direction: column; }
.place { height: 55px; }
.field { display: block; padding: 1px 2px 0 2px; margin-bottom: 1px; }
.field span { display: flex; align-items: center; background: #000; height: 10px; margin-top: 2px; }
.field input { flex: 1; min-width: 0; color: #c9d8df; text-align: center; height: 10px; }
.field i { width: 6px; height: 6px; line-height: 5px; margin-right: 1px; color: #888; border: 1px solid #555; font-size: 5px; }
.format { margin-top: 4px; height: 67px; padding-bottom: 2px; display: flex; flex-direction: column; }
.dd { position: relative; display: flex; width: 50px; flex: none; }
.dd.full { width: auto; margin: 2px 2px 5px; }
.black { appearance: none; flex: 1; background: #000; color: #c9d8df; height: 10px; text-align: center; text-align-last: center; }
.format .check { margin-left: 3px; }
.format > .check { margin-bottom: 5px; }
.line { display: flex; gap: 13px; height: 8px; align-items: center; margin-bottom: 5px; }
.disabled { width: 39px; height: 11px; background: #bfc4c8; color: #909598; border: 1px solid #ccd0d3; }
.engine { margin-top: 24px; height: 38px; }
.engine-grid { display: grid; grid-template-columns: 122px 62px 1fr; row-gap: 3px; padding: 2px 2px; align-items: center; }
.rate { display: flex; gap: 3px; align-items: center; color: #3c5870; }
.import { margin-top: 4px; height: 26px; }
.import-row { display: flex; gap: 13px; padding: 4px 13px 0 3px; }
.import-row .new { margin-left: auto; }
.actions { display: flex; align-items: center; gap: 4px; padding: 3px 0 1px 3px; }
.actions .check { margin-right: auto; }
.actions button { width: 39px; height: 11px; background: #e2e5e8; border: 1px solid #3c8ad0; line-height: 8px; }

.transport { position: absolute; z-index: 3; left: 464px; top: 638px; width: 419px; height: 34px; background: #385269; border: 1px solid #25384a; display: flex; gap: 3px; padding: 1px; color: #6e8799; }
.grip { width: 6px; font-size: 5px; }
.tmeter { width: 7px; background: #0a0f14; display: flex; gap: 1px; border: 1px solid #223443; }
.tmeter i { flex: 1; background: #10181f; }
.tmeter:not(.two):not(.big) i { background: linear-gradient(#131c24 72%, #2fbccb 72%); }
.tmeter.big { width: 20px; }
.tmeter.big i { background: linear-gradient(#1b242c 20%, #46545f 20% 24%, #0f161d 24%); }
.tfader { width: 4px; background: #0c1620; border: 1px solid #89a; border-radius: 2px; }
.tbox { background: #000; border: 1px solid #1d2d3c; display: flex; flex-direction: column; justify-content: space-between; }
.tbox span { display: flex; gap: 2px; line-height: 7px; height: 7px; align-items: center; white-space: nowrap; }
.tbox u { background: #4d647a; color: #c6d3de; line-height: 6px; padding: 0 1px; }
.tbox strong, .tbox em { margin-left: auto; }
.tbox strong { color: #f1f4f6; }
.modes { width: 42px; }
.modes b { color: #c33; width: 7px; }
.modes span { height: 10px; }
.modes u { background: #d5dade; color: #111; }
.locs { width: 58px; }
.locs u:first-child { width: 8px; text-align: center; }
.tmain { width: 136px; display: flex; flex-direction: column; }
.time { height: 11px; background: #000; display: flex; align-items: center; gap: 4px; }
.time b { color: #5c8aa0; line-height: 4px; font-size: 5px; width: 12px; }
.time strong { color: #fff; font-size: 8px; white-space: nowrap; }
.time svg { width: 7px; height: 8px; }
.time span { margin-left: auto; color: #c6d2db; white-space: nowrap; }
.posbar { height: 3px; margin: 1px 0; background: #060a0e; border-bottom: 1px solid #4a6074; }
.posbar i { display: block; width: 7px; height: 2px; background: #35d07c; }
.tkeys { flex: 1; display: flex; background: #222; gap: 1px; padding: 1px; }
.tkeys button { flex: 2; background: linear-gradient(#fff, #b8bdc6); color: #111; display: grid; place-items: center; }
.tkeys .nar { flex: 1; }
.tkeys .vio { background: #7783e8; }
.tkeys .yel { background: #ded25e; }
.tkeys svg { width: 10px; height: 9px; }
.tempo { width: 57px; }
.tempo u.r { margin-left: auto; }
.markers { width: 46px; }
.markers span { font-size: 5px; }
.markers div { display: grid; grid-template-columns: repeat(5, 1fr); text-align: center; line-height: 7px; color: #9aa7b2; }

.taskbar { position: absolute; z-index: 5; left: 0; right: 0; bottom: 0; height: 21px; display: flex; align-items: stretch; background: radial-gradient(ellipse at 570px -12px, #3c3a38 0, #1b1e25 80px, transparent 130px), #050b16; color: #eee; font-family: "Open Sans", sans-serif; }
.taskbar button { width: 25px; display: grid; place-items: center; border-bottom: 2px solid transparent; border-left: 1px solid transparent; }
.taskbar button svg { width: 12px; height: 12px; }
.taskbar .run { border-bottom-color: #76b9ed; }
.taskbar .active { background: #3b4047; border-bottom-color: #76b9ed; }
.taskbar .id { width: 12px; height: 12px; background: #bbb; color: #111; font: bold 8px/12px "Liberation Sans", sans-serif; text-align: center; border-radius: 1px; }
.tray { margin-left: auto; display: flex; align-items: center; gap: 5px; padding-right: 11px; }
.tray svg { width: 8px; height: 8px; }
.tray .red { background: #d3242b; width: 7px; height: 7px; line-height: 7px; text-align: center; }
.tray span { width: 7px; text-align: center; }
.clock { width: 28px; display: flex; flex-direction: column; text-align: center; justify-content: center; line-height: 8px; font-family: "Lato", sans-serif; }
.notice { width: 11px; height: 11px; margin: 5px 10px 0 9px; }
```
FILE: app.js
```js
const $ = (id) => document.getElementById(id);
const icon = (name) => `<svg><use href="#i-${name}"/></svg>`;
const key = (inner, cls = '') => `<button class="key ${cls}">${inner}</button>`;

const tools = (names, cls = [], group = '') => `<div class="tg ${group}">${names.map((n, i) => `<button class="${cls[i] || ''}" aria-label="${n}">${icon(n)}</button>`).join('')}</div>`;
const combo = (text, width, cls = '', pic = '') => `<span class="combo-wrap ${cls}"><select class="combo" aria-label="${text || 'Raster'}" style="width:${width}px"><option>${text}</option></select>${pic}</span>`;
const sep = '<i class="sep"></i>';
$('toolbar').innerHTML = [
  tools(['power'], ['blue'], 'spaced'), tools(['edit'], [], 'spaced'),
  tools(['insp', 'over', 'pool', 'mix', 'fad'], ['blue', 'blue', '', '', 'blue'], 'spaced'),
  tools(['auto']), combo('Touch', 41), sep,
  tools(['start', 'end', 'cycle', 'stop', 'play', 'rec'], ['nar', 'nar', 'vio', 'yel', 'big', 'big']), sep,
  tools(['arrow', 'range', 'split', 'glue', 'erase', 'zoomt', 'mute', 'warp', 'draw', 'line', 'speaker', 'hand'], ['blue'], 'tools'),
  tools(['line'], ['ghost']), combo('-', 14, 'far'), tools(['scroll', 'left'], ['blue', 'dim']), sep, tools(['snap'], ['blue']),
  combo('', 38, '', icon('grid')), tools(['grid'], ['ghost']), combo('Quantisierung', 42), tools(['quant'], ['ghost']), combo('1/1', 41), sep,
  tools(['cross']), sep, '<div class="swatches">' + ['#d33', '#e93', '#dd4', '#3a6', '#48d', '#84c'].map((c) => `<i style="background:${c}"></i>`).join('') + '</div>'
].join('');

$('tabs').innerHTML = [['Insert-Effekte', 'ins', 1], ['Equalizer', 'eq', 1], ['Send-Effekte', 'send'], ['Kanal', 'strip'], ['Notizen', 'pad']]
  .map(([t, ic, byp], i) => `<button class="${i ? '' : 'sel'}">${t}${byp ? '<i class="byp">&#9671;</i>' : ''}${icon(ic)}</button>`).join('');

const tracks = [
  [16, 'Mixmasterbus', '#e2626c', '0.00'], [17, 'Beatbus', '#55aed8', '-6.81'], [18, 'Side cha...al ride', '#67508c', '-∞'],
  [19, 'Vocalrider Bus', '#6a64a2', '-8.03'], [20, 'sample high', '#50a56c', '-7.85'],
  [21, 'Kopie v...adabra', '#a2608f'], [22, 'Kopie v...adabra', '#a2608f'], [23, 'sample mids', '#5f84b8', '-1.84'],
  [24, 'Abracadabra 3', '#5f84b8'], [25, 'Kopie v...adabra', '#dd7097'], [26, 'kick', '#e86870'], [27, 'wood l', '#e86870'], [28, 'wood r', '#e86870'], [29, 'snare l', '#dd9357']
];
$('tracks').innerHTML = tracks.map(([no, name, color, val], i) => {
  let rows = val
    ? `<div class="r">${key('R')}${key('W')}<span class="par">Lautstärke</span></div><div class="r">${key(icon('bars'))}${key(icon('lock'))}<span class="val">${val}</span></div>`
    : `<div class="r"><span class="st">stereo</span><i class="round">●</i><i class="round">◂</i>${key('R', 'gap')}${key('W')}</div>
       <div class="r off"><i class="round">e</i>${key(icon('ins'), no > 25 ? 'blue' : '')}${key(icon('eq'))}${key(icon('send'))}</div>
       <div class="r off">${key(icon('note'), 'amber')}${key(icon('lock'))}${key(icon('lanes'))}</div>`;
  if (no === 29) rows = '';
  return `<div class="track ${val ? 'grp' : ''} ${i ? '' : 'sel'}"><div class="no">${icon(val ? 'fork' : 'wave')}${no}</div><div class="body"><div class="r">${key('m')}${key('S')}<span class="nm">${name}</span></div>${rows}</div><i class="bar" style="background:${color}"></i><div class="met"><i></i></div></div>`;
}).join('');

/* Timeline: four bars every 38.5 units, origin at bar 1. */
const step = 38.5;
let ruler = '<rect x="77" y="1" width="90" height="11" fill="#5386bd"/><path d="M77 1h4l-4 4zM167 1h-4l4 4z" fill="#fff"/><path d="M128 0v12" stroke="#a5734d"/>';
let grid = '<rect x="77" width="90" height="100%" fill="#dfebf4"/>';
for (let k = 0; k < 28; k++) {
  const x = Math.round(k * step);
  ruler += `<path d="M${x} 1v4" stroke="#dde5ea"/><text x="${x}" y="10">${1 + 4 * k}</text>`;
  grid += `<path d="M${x} 0v600" stroke="#cfd5da"/>`;
}
$('ruler').innerHTML = ruler;
for (let r = 1; r < 14; r++) grid += `<path d="M0 ${r * 45 - 1}h1100" stroke="#c3cad0"/>`;
for (const y of [10, 65, 134, 157, 201, 328]) grid += `<path d="M0 ${y}.5h1100" stroke="#73797e"/>`;

const wave = (x, y, w, fill) => {
  let spikes = '';
  for (let i = 4; i <= w; i++) {
    const a = 1 + ((i * i * 7 + i * 3) % 5) * Math.min(1, i / 18) * 0.8;
    spikes += `M${x + i} ${y - a}v${2 * a}`;
  }
  return `<path d="M${x} ${y}h${w}" stroke="#222"/><path d="${spikes}" stroke="${fill === '#fff' ? '#2b1a28' : fill}"/>` + (fill === '#fff' ? `<path d="M${x + 12} ${y}h${w}" stroke="#fff" stroke-width="3" stroke-dasharray="4 1 7 2 3 1"/>` : '');
};
const clip = (x, row, w, fill, label, kind) => {
  const y = row * 45;
  let s = `<svg x="${x}" y="${y}" width="${w}" height="44"><rect width="${w}" height="44" fill="${fill}" stroke="#3b2933"/><path d="M0 37h${w}" stroke="#3b2933"/>`;
  if (kind === 'hit') for (const cy of [9, 27]) {
    s += `<path d="M0 ${cy}h${w}" stroke="#793a42"/>`;
    for (let cx = 11; cx < w; cx += 19) s += `<path d="M${cx} ${cy}h6" stroke="#000"/><circle cx="${cx}" cy="${cy}" r="1.500" fill="#888" stroke="#333"/>`;
  } else s += wave(0, 9, w, kind) + wave(0, 27, w, kind);
  return s + (w > 12 ? `<text x="5" y="43" fill="${kind === '#fff' ? '#eedde8' : kind === '#333' ? '#777' : '#210'}">${label}</text>` : '') + '</svg>';
};
const kit = 'S-Ball Kit - Pa';
for (const r of [5, 6]) grid += clip(0, r, 39, '#a2608f', 'Group A1 - Pa', '#fff') + clip(39, r, 60, '#a2608f', 'Group', '#fff') + `<path d="M1 ${r * 45 + 36}l19-29h19" stroke="#9b91d8" fill="none"/>`;
grid += clip(0, 8, 39, '#b2b4b5', 'Group A1 - Pa', '#333') + clip(39, 8, 60, '#5f84b8', 'Group', '#fff');
grid += clip(0, 9, 39, '#b2b4b5', 'Group A1 - Pa', '#333') + clip(39, 9, 60, '#dd7097', 'Group', '#fff');
for (const [x, w] of [[79, 39], [121, 35], [156, 14], [180, 16], [196, 36], [237, 39], [672, 24]]) grid += clip(x, 10, w, '#e86870', kit, 'hit');
for (const r of [11, 12]) {
  for (const [x, w] of [[79, 39], [118, 39], [157, 10], [175, 19], [194, 31], [310, 39], [349, 38], [387, 39], [426, 38], [541, 39], [580, 38]]) grid += clip(x, r, w, '#e86870', kit, 'hit');
  grid += clip(166, r, 9, '#b2b4b5', '', 'hit');
}
for (const [x, w] of [[79, 94], [180, 44], [237, 459]]) {
  grid += `<rect x="${x}" y="585" width="${w}" height="12" fill="#dd9357" stroke="#442"/>`;
  for (let t = x + 10; t < x + w; t += 10) grid += `<path d="M${t} 585v12" stroke="#644"/>`;
}
grid += '<path d="M128.500 0v480" stroke="#000"/><path d="M128.500 480v120" stroke="#38a0a0" stroke-dasharray="3 2"/>';
$('events').innerHTML = grid;

/* Mixer */
$('sidekeys').innerHTML = '<button class="arr">▾</button><button class="arr">▴</button><button class="arr far">▾</button><button class="arr">▴</button><div class="rest">' +
  ['[m]', '[S]', '[L]', '[R]', '[W]', 'OH', '▢', '▣', '▤'].map((t, i) => `<button class="${i === 0 || i === 3 ? 'lit' : ''}">${t}</button>`).join('') + '</div>';
$('sideicons').innerHTML = ['dots', 'ins', 'eq', 'eq', 'preset', 'preset', 'preset', 'star', 'box', 'm', 'pool', 'dots', 'keys', 'draw', 'ins', 'wave', 'fork', 'eq', 'send', 'fad', 'cycle', 'dots'].map(icon).join('');

const strip = (c) => {
  let slots = '';
  if (c.eq) {
    for (const [n, f, q] of [[4, '12000 Hz', '7.0'], [3, '2000.0 Hz', '0.2'], [2, '800.0 Hz', '0.2'], [1, '100.0 Hz', '7.0']])
      slots += `<div class="eqs"><div class="hd"><i class="pw">Ø</i><span class="lab">eq ${n}</span></div><div class="bx">0.0<br>${f}<br>${q}</div></div>`;
  } else {
    for (let i = 1; i <= 8; i++) {
      const fx = (c.fx || [])[i - 1];
      slots += `<div class="slot"><div class="hd"><i class="pw ${fx ? 'on' : ''}">Ø</i>${fx ? '<i class="pw lit">▽</i><i class="pw lit">e</i>' : ''}<span class="lab ${i > 6 ? 'y' : ''}">i ${i}</span></div><div class="bx ${fx ? 'full' : ''}">${fx || ''}</div></div>`;
    }
  }
  const io = c.io;
  const keys = key('m', c.mute ? 'yellow' : '') + (io === 'in' ? '<i class="skip"></i>' : key('S')) + key('L') + '<i class="sp"></i>' + key('R') + key('W') +
    `<i class="round ${c.cur ? 'on' : ''}">e</i>` + key(icon('ins'), c.ins ? 'blue' : '') + key(icon('eq')) + (io ? '' : key(icon('send')));
  const rec = c.audio ? '<i class="mon push"></i><i class="rc"></i>' : '';
  return `<div class="strip ${c.cur ? 'cur' : ''}"><div class="bus ${c.a ? '' : 'none'}">${c.a || ''}</div><div class="bus ${c.b ? '' : 'none'}">${c.b || ''}</div><div class="fmt">${c.f || 'stereo'}</div>
    <div class="gain"><span class="ph">ø</span><span class="db">${io === 'out' ? '-0.0' : '0.0'}</span><i class="knob"></i></div><div class="slots">${slots}</div>
    <div class="panrow"><i>◂</i><i>▾</i></div>
    <div class="fadersec"><div class="pan ${io === 'in' ? 'mono' : ''}">${io === 'in' ? 'no panner' : ''}</div><div class="fcols"><div class="lcol"><div class="cc">${io === 'in' ? '' : 'C'}</div><div class="caps">${keys}${rec}</div></div>
    <div class="fcol"><div class="fader" style="--fc:${c.fc}"><i class="cap" style="top:${c.y}px"></i><i class="mt"></i></div><div class="fval"><small>${c.p || '-∞'}</small><span>${c.v}</span></div></div></div></div>
    <div class="cname" style="background:${c.color};${c.light ? 'color:#fff' : ''}">${c.n}</div><div class="cno">${c.no || ''}</div></div>`;
};
$('inbank').innerHTML = strip({ io: 'in', f: 'mono', n: 'Mono In', color: '#020c18', light: 1, fc: '#a8abad', y: 21, v: '0.00', p: '-88.8' });
$('outbank').innerHTML = strip({ io: 'out', n: 'Stereo Out', color: '#020c18', light: 1, fc: '#a8abad', y: 21, v: '0.00', p: '-1.8' });
const mid = [];
const shown = { 0: ['Psyc... Mix1', '#dd7097', 22, '-0.12'], 1: ['Psyc... Mix2', '#5f84b8', 24, '-0.56'], 2: ['Psych...', '#5f84b8', 27, '-1.20'], 13: ['Psych...ng-31', '#6a64a2', 22, '0.00', '-1.9'], 14: ['Mix d...rojekt', '#5f84b8', 22, '0.00', '-1.9'] };
for (let k = 0; k < 15; k++) {
  const s = shown[k] || ['Psycho', '#5f84b8', 22, '0.00'];
  mid.push({ a: k > 9 && k < 14 ? 'Stereo In' : 'Kein Bus', b: 'Stereo Out', eq: k > 9 && k < 14, n: s[0], color: s[1], y: s[2], v: s[3], p: s[4], fc: '#6583ab', mute: 1, audio: 1, no: k + 1 });
}
mid.push({ b: 'Stereo Out', fx: ['PuigT...tereo', 'Ozone...alizer', 'SSLCo...tereo'], n: 'Mixm...rbus', color: '#e86870', y: 22, v: '0.00', p: '-1.9', fc: '#5b96a1', cur: 1, ins: 1, no: 16 });
mid.push({ b: 'Mixmasterbus', fx: ['Ozone...alizer', 'S1 Im...tereo'], n: 'Beatbus', color: '#55aed8', y: 45, v: '-6.81', p: '-9.1', fc: '#5b96a1', ins: 1, no: 17 });
mid.push({ b: 'Mixmasterbus', f: 'mono', n: 'Side c... rider', color: '#67508c', light: 1, y: 97, v: '-∞', fc: '#5b96a1', no: 18 });
$('midbank').innerHTML = mid.map(strip).join('');

/* Export dialog channel list */
const tree = [['Ausgangskanäle', ['Stereo Out']], ['Gruppenkanäle', ['Mixmasterbus', 'Beatbus', 'Side chain Vocal rider', 'Vocalrider Bus', 'sample high', 'sample mids', 'Gesang', 'Widening Gesang', 'Intro', 'Rap', 'Widening Rap', 'SC Comp', 'Bridge', 'Chorus', 'Wide chorus']], ['VST-Instrumentkanäle', ['Maschine Out 1']], ['Audiokanäle', ['Psycho,mein Flow Mix1', 'Psycho,mein Flow Mix2', 'Psycho, mein Flow Mix3']]];
$('tree').innerHTML = tree.map(([g, items]) => `<div>${g}</div>` + items.map((t) => `<label><input type="checkbox" ${t === 'Stereo Out' ? 'checked' : ''}><span>${t}</span></label>`).join('')).join('');

$('tkeys').innerHTML = [['start', 'nar'], ['rew'], ['fwd'], ['end', 'nar'], ['cycle', 'vio'], ['stop', 'yel'], ['play'], ['rec']].map(([n, c = '']) => `<button class="${c}" aria-label="${n}">${icon(n)}</button>`).join('');
$('marks').innerHTML = Array.from({ length: 15 }, (_, i) => `<b>${i + 1}</b>`).join('');
```
